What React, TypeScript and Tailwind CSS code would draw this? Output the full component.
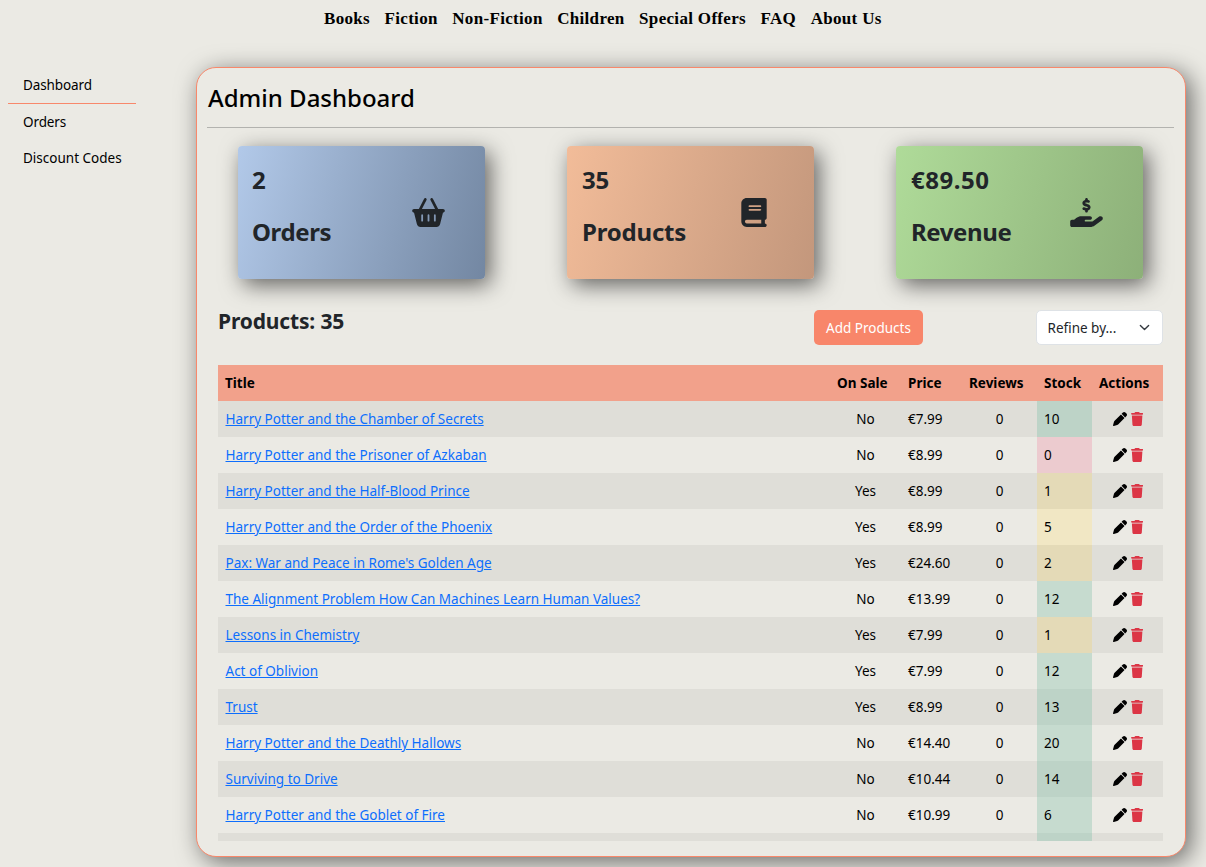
import { FaBasketShopping, FaBook, FaHandHoldingDollar, FaPen, FaTrash } from "react-icons/fa6";

const nav = ["Books", "Fiction", "Non-Fiction", "Children", "Special Offers", "FAQ", "About Us"];

type Book = { title: string; sale: string; price: string; stock: number };

const books: Book[] = [
  { title: "Harry Potter and the Chamber of Secrets", sale: "No", price: "€7.99", stock: 10 },
  { title: "Harry Potter and the Prisoner of Azkaban", sale: "No", price: "€8.99", stock: 0 },
  { title: "Harry Potter and the Half-Blood Prince", sale: "Yes", price: "€8.99", stock: 1 },
  { title: "Harry Potter and the Order of the Phoenix", sale: "Yes", price: "€8.99", stock: 5 },
  { title: "Pax: War and Peace in Rome's Golden Age", sale: "Yes", price: "€24.60", stock: 2 },
  { title: "The Alignment Problem How Can Machines Learn Human Values?", sale: "No", price: "€13.99", stock: 12 },
  { title: "Lessons in Chemistry", sale: "Yes", price: "€7.99", stock: 1 },
  { title: "Act of Oblivion", sale: "Yes", price: "€7.99", stock: 12 },
  { title: "Trust", sale: "Yes", price: "€8.99", stock: 13 },
  { title: "Harry Potter and the Deathly Hallows", sale: "No", price: "€14.40", stock: 20 },
  { title: "Surviving to Drive", sale: "No", price: "€10.44", stock: 14 },
  { title: "Harry Potter and the Goblet of Fire", sale: "No", price: "€10.99", stock: 6 },
];

const cards = [
  { value: "2", label: "Orders", bg: "from-[#b2c9e9] to-[#7387a2]", Icon: FaBasketShopping, pad: "pr-[40px]", size: "w-[33px]", text: "tracking-[-0.4px] pl-[14px]" },
  { value: "35", label: "Products", bg: "from-[#f2bc99] to-[#c3977c]", Icon: FaBook, pad: "pr-[47px]", size: "w-[26px]", text: "tracking-[-0.2px] pl-[15px]" },
  { value: "€89.50", label: "Revenue", bg: "from-[#afdb99] to-[#8db079]", Icon: FaHandHoldingDollar, pad: "pr-[40px]", size: "w-[33px]", text: "pl-[15px]" },
];

const cols = "grid grid-cols-[612px_71px_61px_75px_55px_71px]";

function stockColor(n: number) {
  if (n === 0) return "bg-[#f085a0]/30";
  if (n === 5) return "bg-[#ffe17a]/30";
  if (n < 5) return "bg-[#f3d26b]/30";
  return "bg-[#70b8a0]/30";
}

export default function App() {
  return (
    <div className="flex h-[867px] w-[1206px] flex-col overflow-hidden bg-[#ebeae4] font-['Noto_Sans',sans-serif] text-[13.5px] text-black">
      <nav className="flex h-[67px] shrink-0 gap-[14.5px] pl-[324px] pt-[7px] font-['Liberation_Serif',serif] text-[17px] font-bold leading-6 tracking-[0.32px]">
        {nav.map((n) => (
          <a key={n} className="whitespace-nowrap">{n}</a>
        ))}
      </nav>
      <div className="flex">
        <aside className="flex w-[196px] shrink-0 flex-col pl-2">
          <a className="flex h-[37px] w-32 items-center border-b border-[#f8886b] pl-[15px] tracking-[-0.1px]">Dashboard</a>
          <a className="flex h-9 w-32 items-center whitespace-nowrap pl-[15px] tracking-[-0.1px]">Orders</a>
          <a className="flex h-9 w-32 items-center whitespace-nowrap pl-[15px]">Discount Codes</a>
        </aside>
        <main className="flex h-[790px] w-[990px] shrink-0 flex-col rounded-[20px] border border-[#f8886b] bg-[#ebeae4] shadow-[5px_5px_24px_rgba(0,0,0,0.55)]">
          <h1 className="ml-[10px] mr-[11px] flex h-[60px] shrink-0 items-center border-b border-[#b3b3af] pl-px text-[24px] font-medium">Admin Dashboard</h1>
          <section className="mt-[18px] grid shrink-0 grid-cols-[329px_329px_329px] justify-items-center">
            {cards.map(({ value, label, bg, Icon, pad, size, text }) => (
              <div key={label} className={`flex h-[133px] w-[247px] items-center justify-between rounded bg-linear-105 text-[24px] font-bold text-[#212529] shadow-[5px_6px_22px_rgba(0,0,0,0.58)] ${text} ${bg} ${pad}`}>
                <div className="flex h-full flex-col gap-[22px] pt-[19px] leading-[30px]">
                  <span className={value.startsWith("€") ? "tracking-[0.5px]" : ""}>{value}</span>
                  <span className={label === "Revenue" ? "tracking-[-0.4px]" : ""}>{label}</span>
                </div>
                <Icon className={`h-[29px] ${size}`} />
              </div>
            ))}
          </section>
          <section className="ml-[21px] mt-[31px] flex h-[55px] w-[945px] shrink-0 items-start">
            <h2 className="-mt-px w-[596px] text-[21px] font-bold leading-6 tracking-[-0.15px] text-[#212529]">Products: 35</h2>
            <button className="h-[35px] w-[109px] rounded-[5px] bg-[#f8866a] pt-px text-white">Add Products</button>
            <button className="ml-[113px] flex h-[35px] w-[127px] items-center justify-between rounded-[5px] border border-[#dee2e6] bg-white pl-[10.5px] pr-[12.5px] pt-px text-[#212529]">
              Refine by...
              <svg viewBox="0 0 16 16" className="mb-px size-[11px]" fill="none" stroke="#343a40" strokeWidth="2" strokeLinecap="round" strokeLinejoin="round">
                <path d="m2 5 6 6 6-6" />
              </svg>
            </button>
          </section>
          <section className="ml-[21px] h-[476px] w-[945px] overflow-hidden">
            <div className={`${cols} h-9 items-center bg-[#f2a18b] font-bold [&>span]:pl-[7px]`}>
              <span>Title</span>
              <span>On Sale</span>
              <span>Price</span>
              <span>Reviews</span>
              <span>Stock</span>
              <span>Actions</span>
            </div>
            {books.map((b) => (
              <div key={b.title} className={`${cols} h-9 leading-9 odd:bg-transparent even:bg-[#dfded8]`}>
                <a className="pl-[7.5px] text-[#0d6efd] underline">{b.title}</a>
                <span className="text-center">{b.sale}</span>
                <span className="pl-[7px]">{b.price}</span>
                <span className="text-center">0</span>
                <span className={`pl-[7px] ${stockColor(b.stock)}`}>{b.stock}</span>
                <span className="flex items-center justify-center gap-1 pl-px">
                  <FaPen className="size-[14px]" />
                  <FaTrash className="h-[14px] w-[12.25px] text-[#dc3545]" />
                </span>
              </div>
            ))}
            <div className={`${cols} h-9 bg-[#dfded8]`}>
              <span className="col-start-5 bg-[#70b8a0]/30" />
            </div>
          </section>
        </main>
      </div>
    </div>
  );
}
